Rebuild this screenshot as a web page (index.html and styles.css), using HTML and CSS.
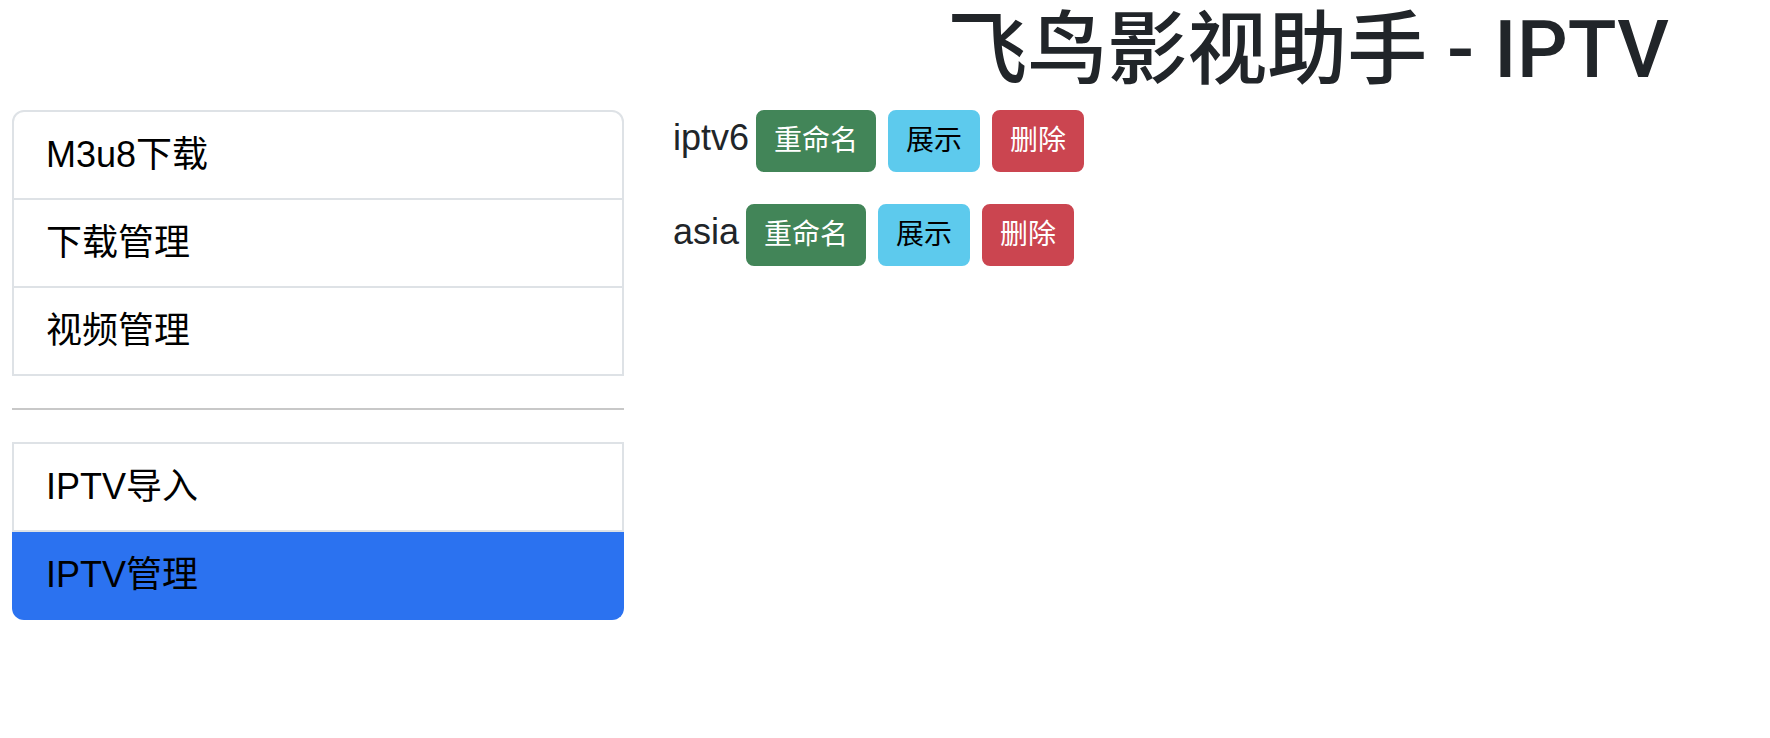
FILE: index.html
```html
<!DOCTYPE html>
<html lang="zh-CN">
<head>
<meta charset="utf-8">
<title>飞鸟影视助手 - IPTV</title>
<link rel="stylesheet" href="styles.css">
</head>
<body>
<header class="header">
  <h1 class="title">飞鸟影视助手 - IPTV</h1>
</header>
<main class="main">
  <nav class="sidebar">
    <ul class="list list-top">
      <li class="item">M3u8下载</li>
      <li class="item">下载管理</li>
      <li class="item">视频管理</li>
    </ul>
    <hr class="divider">
    <ul class="list list-bottom">
      <li class="item">IPTV导入</li>
      <li class="item active">IPTV管理</li>
    </ul>
  </nav>
  <section class="content">
    <div class="row">
      <span class="name">iptv6</span>
      <button class="btn btn-green">重命名</button>
      <button class="btn btn-cyan">展示</button>
      <button class="btn btn-red">删除</button>
    </div>
    <div class="row">
      <span class="name">asia</span>
      <button class="btn btn-green">重命名</button>
      <button class="btn btn-cyan">展示</button>
      <button class="btn btn-red">删除</button>
    </div>
  </section>
</main>
</body>
</html>
```
FILE: styles.css
```css
* { box-sizing: border-box; }
html, body { margin: 0; padding: 0; background: #fff; }
body {
  font-family: "Liberation Sans", "Noto Sans CJK SC", sans-serif;
  color: #212529;
}
.header {
  padding-left: 846px;
  text-align: center;
}
.title {
  margin: 2px 0 12px;
  font-family: "Roboto", "Noto Sans CJK SC", sans-serif;
  font-size: 80px;
  line-height: 96px;
  font-weight: 500;
  color: #212529;
}
.main {
  display: flex;
  align-items: flex-start;
  padding-left: 12px;
  gap: 49px;
}
.sidebar {
  width: 612px;
  flex: none;
}
.list {
  list-style: none;
  margin: 0;
  padding: 0;
}
.item {
  font-size: 36px;
  line-height: 54px;
  padding: 16px 32px;
  color: #000;
  border: 2px solid #dee2e6;
  background: #fff;
}
.item + .item { border-top: 0; }
.list-top .item:first-child { border-radius: 12px 12px 0 0; }
.list-bottom .item:last-child { border-radius: 0 0 12px 12px; }
.item.active {
  background: #2b72f0;
  border-color: #2b72f0;
}
.divider {
  margin: 32px 0;
  border: 0;
  height: 2px;
  background: #c8c8c8;
}
.content {
  display: flex;
  flex-direction: column;
  gap: 32px;
}
.row {
  display: flex;
  align-items: baseline;
}
.name {
  font-size: 36px;
  line-height: 54px;
  margin-right: 7px;
  color: #212529;
}
.name-tight { letter-spacing: -0.5px; }
.btn {
  font-family: "Liberation Sans", "Noto Sans CJK SC", sans-serif;
  font-size: 28px;
  line-height: 42px;
  padding: 8px 16px;
  border: 2px solid transparent;
  border-radius: 8px;
  margin-right: 12px;
  cursor: pointer;
}
.btn-green { background: #428558; border-color: #428558; color: #fff; }
.btn-cyan { background: #5dcaed; border-color: #5dcaed; color: #000; }
.btn-red { background: #cb4550; border-color: #cb4550; color: #fff; }
```
